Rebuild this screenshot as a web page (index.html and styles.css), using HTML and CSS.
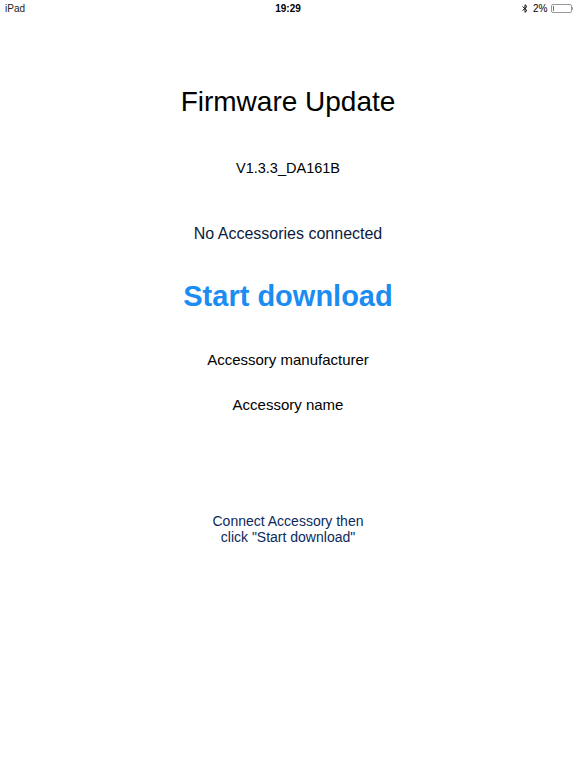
FILE: index.html
```html
<!DOCTYPE html>
<html lang="en">
<head>
  <meta charset="UTF-8" />
  <meta name="viewport" content="width=device-width, initial-scale=1.0"/>
  <title>Firmware Update</title>
  <link rel="stylesheet" href="styles.css">
</head>
<body>

  <div class="status-bar">
    <span class="device">iPad</span>
    <span class="clock">19:29</span>
    <span class="status-right">
      <svg class="bt-icon" width="6" height="9" viewBox="0 0 6 9">
        <path d="M0.5 2.5 L5 6.5 L3 8.3 L3 0.7 L5 2.5 L0.5 6.5" fill="none" stroke="#000" stroke-width="0.9"/>
      </svg>
      <span class="battery-text">2%</span>
      <span class="battery">
        <span class="battery-level"></span>
      </span>
      <span class="battery-tip"></span>
    </span>
  </div>

  <div class="content">
    <h1 class="title">Firmware Update</h1>
    <p class="version">V1.3.3_DA161B</p>
    <p class="connection">No Accessories connected</p>
    <button class="download-button">Start download</button>
    <p class="info manufacturer">Accessory manufacturer</p>
    <p class="info name">Accessory name</p>
    <p class="hint">Connect Accessory then<br>click "Start download"</p>
  </div>

</body>
</html>
```

FILE: styles.css
```css
body {
  font-family: 'Liberation Sans', Arial, sans-serif;
  background-color: #ffffff;
  margin: 0;
  padding: 0;
  color: #000;
}

.status-bar {
  height: 16px;
  display: flex;
  align-items: center;
  justify-content: space-between;
  padding: 0 3px 0 5px;
  font-size: 10px;
  position: relative;
}

.device {
  color: #222;
}

.clock {
  position: absolute;
  left: 0;
  right: 0;
  text-align: center;
  font-weight: bold;
}

.status-right {
  display: flex;
  align-items: center;
  gap: 3px;
}

.battery-text {
  margin-left: 2px;
}

.battery {
  width: 21px;
  height: 9px;
  border: 1px solid #999;
  border-radius: 2px;
  padding: 1px;
  box-sizing: border-box;
  display: flex;
}

.battery-level {
  width: 1px;
  background-color: #ff3b30;
}

.battery-tip {
  width: 1.5px;
  height: 3px;
  background-color: #999;
  margin-left: -3px;
  border-radius: 0 1px 1px 0;
}

.content {
  display: flex;
  flex-direction: column;
  align-items: center;
  text-align: center;
}

.title {
  font-size: 28px;
  font-weight: normal;
  margin: 70px 0 0;
  line-height: 32px;
}

.version {
  font-size: 14.5px;
  margin: 41px 0 0;
  line-height: 18px;
}

.connection {
  font-size: 16px;
  color: #0b1c3d;
  margin: 47px 0 0;
  line-height: 20px;
}

.download-button {
  font-family: inherit;
  font-size: 29px;
  font-weight: bold;
  color: #1a8cf2;
  background: none;
  border: none;
  padding: 0;
  margin: 35px 0 0;
  line-height: 34px;
  cursor: pointer;
}

.info {
  font-size: 15px;
  margin: 0;
  line-height: 18px;
}

.manufacturer {
  margin-top: 38px;
}

.name {
  margin-top: 27px;
}

.hint {
  font-size: 14px;
  color: #0b2a5c;
  margin: 99px 0 0;
  line-height: 16px;
}
```
